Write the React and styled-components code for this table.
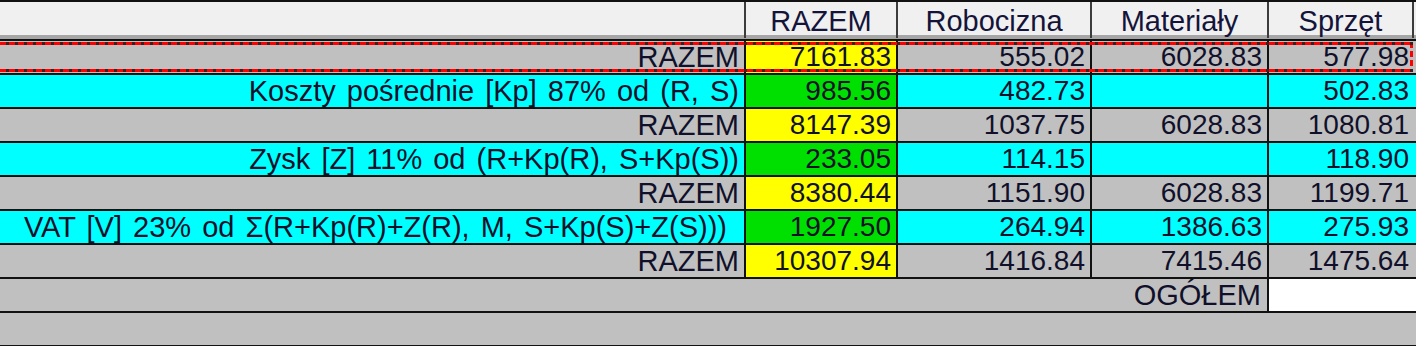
import React from 'react';
import styled, { createGlobalStyle, css } from 'styled-components';

const GlobalStyle = createGlobalStyle`
  html, body {
    margin: 0;
    padding: 0;
    background: #ffffff;
  }
  body {
    font-family: "Liberation Sans", Arial, sans-serif;
    color: #10102a;
  }
`;

const COLUMNS = '746px 152px 194px 177px 145px 1fr';

const Sheet = styled.div`
  width: 1416px;
  overflow: hidden;
`;

const HeaderRow = styled.div`
  display: grid;
  grid-template-columns: ${COLUMNS};
  height: 39px;
  box-sizing: border-box;
  border-top: 2px solid #111;
  border-bottom: 4px solid #a6a6a6;
  background: #f0f0f0;
`;

const HeadCell = styled.div`
  display: flex;
  align-items: center;
  justify-content: center;
  padding-top: 3px;
  font-size: 29px;
  color: #14143a;
  border-right: ${(p) => (p.$edge ? '2px solid #3c3c3c' : 'none')};
  box-sizing: border-box;
`;

const Body = styled.div`
  border-top: 2px solid #111;
`;

const bg = {
  gray: '#c0c0c0',
  cyan: '#00ffff',
  yellow: '#ffff00',
  green: '#00e000',
  white: '#ffffff',
};

const Row = styled.div`
  position: relative;
  display: grid;
  grid-template-columns: ${COLUMNS};
  height: 34px;
  box-sizing: border-box;
  border-bottom: 2px solid #111;
  background: ${(p) => bg[p.$tone || 'gray']};
`;

const Marquee = styled.div`
  position: absolute;
  left: 0;
  right: 3px;
  top: 1px;
  bottom: 1px;
  pointer-events: none;
  background-image:
    repeating-linear-gradient(90deg, #ff0000 0 6px, #3a2020 6px 9px),
    repeating-linear-gradient(90deg, #ff0000 0 6px, #3a2020 6px 9px),
    repeating-linear-gradient(180deg, #ff0000 0 6px, transparent 6px 9px);
  background-size: 100% 3px, 100% 3px, 3px 100%;
  background-position: top left, bottom left, top right;
  background-repeat: no-repeat;
`;

const Cell = styled.div`
  display: flex;
  align-items: center;
  justify-content: flex-end;
  padding-right: ${(p) => p.$pad ?? 5}px;
  font-size: 28px;
  white-space: nowrap;
  overflow: hidden;
  box-sizing: border-box;
  border-right: ${(p) => (p.$edge ? '2px solid #111' : 'none')};
  ${(p) => p.$tone && css`background: ${bg[p.$tone]};`}
  ${(p) => p.$span && css`grid-column: ${p.$span};`}
`;

const Label = styled(Cell)`
  font-size: 29px;
  word-spacing: 3px;
`;

const rows = [
  { label: 'RAZEM', tone: 'gray', sum: '7161.83', sumTone: 'yellow', r: '555.02', m: '6028.83', s: '577.98', marquee: true },
  { label: 'Koszty pośrednie [Kp] 87% od (R, S)', tone: 'cyan', sum: '985.56', sumTone: 'green', r: '482.73', m: '', s: '502.83' },
  { label: 'RAZEM', tone: 'gray', sum: '8147.39', sumTone: 'yellow', r: '1037.75', m: '6028.83', s: '1080.81' },
  { label: 'Zysk [Z] 11% od (R+Kp(R), S+Kp(S))', tone: 'cyan', sum: '233.05', sumTone: 'green', r: '114.15', m: '', s: '118.90' },
  { label: 'RAZEM', tone: 'gray', sum: '8380.44', sumTone: 'yellow', r: '1151.90', m: '6028.83', s: '1199.71' },
  { label: 'VAT [V] 23% od Σ(R+Kp(R)+Z(R), M, S+Kp(S)+Z(S)))', tone: 'cyan', sum: '1927.50', sumTone: 'green', r: '264.94', m: '1386.63', s: '275.93', pad: 17 },
  { label: 'RAZEM', tone: 'gray', sum: '10307.94', sumTone: 'yellow', r: '1416.84', m: '7415.46', s: '1475.64' },
];

const headers = ['RAZEM', 'Robocizna', 'Materiały', 'Sprzęt'];

const App = () => (
  <>
    <GlobalStyle />
    <Sheet>
      <HeaderRow>
        <HeadCell $edge />
        {headers.map((h) => (
          <HeadCell key={h} $edge>{h}</HeadCell>
        ))}
        <HeadCell />
      </HeaderRow>
      <Body>
        {rows.map((row, i) => (
          <Row key={i} $tone={row.tone}>
            <Label $edge $pad={row.pad}>{row.label}</Label>
            <Cell $edge $tone={row.sumTone}>{row.sum}</Cell>
            <Cell $edge>{row.r}</Cell>
            <Cell $edge>{row.m}</Cell>
            <Cell>{row.s}</Cell>
            <Cell />
            {row.marquee && <Marquee />}
          </Row>
        ))}
        <Row>
          <Label $edge $span="1 / 5" $pad={6}>OGÓŁEM</Label>
          <Cell $tone="white" $span="5 / 7" />
        </Row>
        <Row />
      </Body>
    </Sheet>
  </>
);

export default App;
